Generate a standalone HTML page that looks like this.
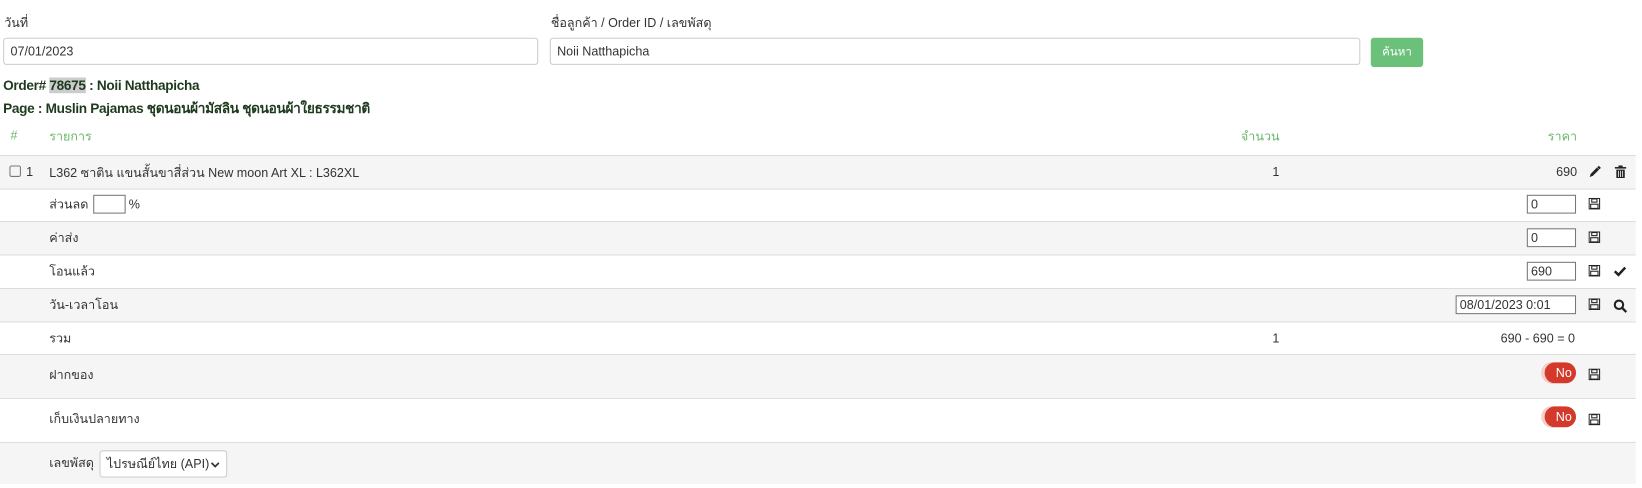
<!DOCTYPE html><html><head><meta charset="utf-8"><style>
html,body{margin:0;width:1642px;height:488px;overflow:hidden;background:#fff}
#w{position:absolute;left:0;top:0;width:1568px;height:466px;transform:scale(1.0472);transform-origin:0 0;font-family:"Liberation Sans","Noto Sans CJK SC",sans-serif;font-size:12px;color:#333}
.a{position:absolute}
.inp{position:absolute;border:1px solid #ccc;border-radius:3px;background:#fff;box-sizing:border-box;padding-left:6px;line-height:24px;font-size:12px;color:#333}
.row{position:absolute;left:0;width:1562px;border-top:1px solid #ddd;box-sizing:border-box}
.g{background:#f5f5f5}
.sm{position:absolute;border:1px solid #777;background:#fff;box-sizing:border-box;height:18px;line-height:16px;padding-left:3px;font-size:12px}
.tog{position:absolute;width:33px;height:20px;border-radius:10px;background:#d33a2c;color:#fff;font-size:12px;line-height:20px;text-align:right;padding-right:4px;box-sizing:border-box;box-shadow:inset 3px 0 0 #f6d0cc}
</style></head><body><div id="w">
<div class="a" style="left:4px;top:13px">วันที่</div>
<div class="inp" style="left:3px;top:36px;width:511px;height:26px">07/01/2023</div>
<div class="a" style="left:526px;top:13px">ชื่อลูกค้า / Order ID / เลขพัสดุ</div>
<div class="inp" style="left:525px;top:36px;width:774px;height:26px">Noii Natthapicha</div>
<div class="a" style="left:1309px;top:36px;width:50px;height:28px;background:#6cc17a;border-radius:3px;color:#fff;font-size:11px;line-height:28px;text-align:center">ค้นหา</div>
<div class="a" style="left:3px;top:74px;font-weight:bold;font-size:13px;color:#1e3a1e;letter-spacing:-0.3px">Order# <span style="background:#ccc">78675</span> : Noii Natthapicha</div>
<div class="a" style="left:3px;top:93px;font-weight:bold;font-size:13px;color:#1e3a1e;letter-spacing:-0.3px">Page : Muslin Pajamas ชุดนอนผ้ามัสลิน ชุดนอนผ้าใยธรรมชาติ</div>
<div class="a" style="left:10px;top:122px;color:#6ab96a">#</div>
<div class="a" style="left:47px;top:121px;color:#6ab96a">รายการ</div>
<div class="a" style="left:1185px;top:121px;color:#6ab96a">จำนวน</div>
<div class="a" style="left:1478px;top:121px;color:#6ab96a">ราคา</div>

<div class="row g" style="top:148px;height:32px"></div>
<div class="a" style="left:9px;top:158px;width:9px;height:9px;border:1px solid #777;border-radius:2px"></div>
<div class="a" style="left:25px;top:157px">1</div>
<div class="a" style="left:47px;top:156px">L362 ซาติน แขนสั้นขาสี่ส่วน New moon Art XL : L362XL</div>
<div class="a" style="left:1215px;top:157px">1</div>
<div class="a" style="left:1486px;top:157px">690</div>
<svg class="a" style="left:1517px;top:158px" width="12" height="12" viewBox="0 0 12 12"><path d="M1 11l1-3 6-6 2 2-6 6z" fill="#222"/><path d="M9 1l2 2" stroke="#222" stroke-width="2"/></svg>
<svg class="a" style="left:1542px;top:158px" width="11" height="12" viewBox="0 0 11 12"><rect x="0" y="1.5" width="11" height="1.5" fill="#222"/><rect x="3.5" y="0" width="4" height="2" fill="#222"/><path d="M1.5 4h8v8h-8z" fill="#222"/><path d="M3.5 5v6M5.5 5v6M7.5 5v6" stroke="#f5f5f5" stroke-width="0.8"/></svg>

<div class="row" style="top:180px;height:31px"></div>
<div class="a" style="left:47px;top:186px">ส่วนลด</div>
<div class="sm" style="left:89px;top:186px;width:31px"></div>
<div class="a" style="left:123px;top:188px">%</div>
<div class="sm" style="left:1458px;top:186px;width:47px">0</div>

<div class="row g" style="top:211px;height:32px"></div>
<div class="a" style="left:47px;top:218px">ค่าส่ง</div>
<div class="sm" style="left:1458px;top:218px;width:47px">0</div>

<div class="row" style="top:243px;height:32px"></div>
<div class="a" style="left:47px;top:250px">โอนแล้ว</div>
<div class="sm" style="left:1458px;top:250px;width:47px">690</div>
<svg class="a" style="left:1541px;top:254px" width="12" height="10" viewBox="0 0 12 10"><path d="M1 5l3.5 3.5L11 1.5" fill="none" stroke="#222" stroke-width="2.4"/></svg>

<div class="row g" style="top:275px;height:32px"></div>
<div class="a" style="left:47px;top:282px">วัน-เวลาโอน</div>
<div class="sm" style="left:1390px;top:282px;width:115px">08/01/2023 0:01</div>
<svg class="a" style="left:1540px;top:285px" width="14" height="14" viewBox="0 0 14 14"><circle cx="6" cy="6" r="4" fill="none" stroke="#222" stroke-width="2"/><path d="M9 9l4 4" stroke="#222" stroke-width="2.2"/></svg>

<div class="row" style="top:307px;height:31px"></div>
<div class="a" style="left:47px;top:314px">รวม</div>
<div class="a" style="left:1215px;top:316px">1</div>
<div class="a" style="left:1433px;top:316px">690 - 690 = 0</div>

<div class="row g" style="top:338px;height:42px"></div>
<div class="a" style="left:47px;top:349px">ฝากของ</div>
<div class="tog" style="left:1472px;top:346px">No</div>

<div class="row" style="top:380px;height:42px"></div>
<div class="a" style="left:47px;top:391px">เก็บเงินปลายทาง</div>
<div class="tog" style="left:1472px;top:388px">No</div>

<div class="row g" style="top:422px;height:40px"></div>
<div class="a" style="left:47px;top:433px">เลขพัสดุ</div>
<div class="inp" style="left:95px;top:430px;width:122px;height:26px">ไปรษณีย์ไทย (API)<svg style="position:absolute;right:6px;top:10px" width="9" height="6" viewBox="0 0 9 6"><path d="M1 1l3.5 3.5L8 1" fill="none" stroke="#333" stroke-width="1.6"/></svg></div>

<svg width="0" height="0" style="position:absolute"><defs><g id="fl"><rect x="0.5" y="0.5" width="10" height="10" fill="none" stroke="#222"/><rect x="3" y="1" width="5" height="3" fill="none" stroke="#222"/><rect x="2" y="6" width="7" height="4" fill="none" stroke="#222"/></g></defs></svg>
<svg class="a" style="left:1517px;top:189px" width="12" height="12"><use href="#fl"/></svg>
<svg class="a" style="left:1517px;top:221px" width="12" height="12"><use href="#fl"/></svg>
<svg class="a" style="left:1517px;top:253px" width="12" height="12"><use href="#fl"/></svg>
<svg class="a" style="left:1517px;top:285px" width="12" height="12"><use href="#fl"/></svg>
<svg class="a" style="left:1517px;top:352px" width="12" height="12"><use href="#fl"/></svg>
<svg class="a" style="left:1517px;top:395px" width="12" height="12"><use href="#fl"/></svg>
</div></body></html>
